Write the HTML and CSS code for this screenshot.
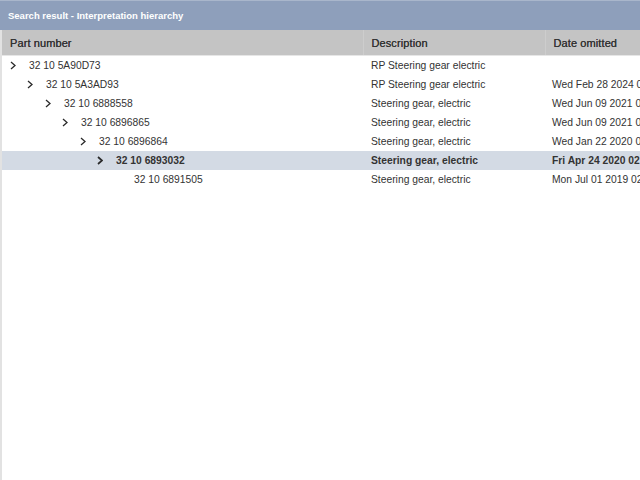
FILE: index.html
```html
<!DOCTYPE html>
<html>
<head>
<meta charset="utf-8">
<link rel="stylesheet" href="styles.css">
</head>
<body>
<div class="panel">
  <div class="titlebar">Search result - Interpretation hierarchy</div>
  <div class="content">
    <table class="grid">
      <colgroup>
        <col class="c-part">
        <col class="c-desc">
        <col class="c-date">
      </colgroup>
      <thead>
        <tr>
          <th class="h-part">Part number</th>
          <th>Description</th>
          <th>Date omitted</th>
        </tr>
      </thead>
      <tbody>
        <tr>
          <td><span class="node l0"><svg class="chev" viewBox="0 0 6 9"><polyline points="1,1 5,4.5 1,8"/></svg>32 10 5A90D73</span></td>
          <td>RP Steering gear electric</td>
          <td></td>
        </tr>
        <tr>
          <td><span class="node l1"><svg class="chev" viewBox="0 0 6 9"><polyline points="1,1 5,4.5 1,8"/></svg>32 10 5A3AD93</span></td>
          <td>RP Steering gear electric</td>
          <td>Wed Feb 28 2024 02:00:00</td>
        </tr>
        <tr>
          <td><span class="node l2"><svg class="chev" viewBox="0 0 6 9"><polyline points="1,1 5,4.5 1,8"/></svg>32 10 6888558</span></td>
          <td>Steering gear, electric</td>
          <td>Wed Jun 09 2021 02:00:00</td>
        </tr>
        <tr>
          <td><span class="node l3"><svg class="chev" viewBox="0 0 6 9"><polyline points="1,1 5,4.5 1,8"/></svg>32 10 6896865</span></td>
          <td>Steering gear, electric</td>
          <td>Wed Jun 09 2021 02:00:00</td>
        </tr>
        <tr>
          <td><span class="node l4"><svg class="chev" viewBox="0 0 6 9"><polyline points="1,1 5,4.5 1,8"/></svg>32 10 6896864</span></td>
          <td>Steering gear, electric</td>
          <td>Wed Jan 22 2020 01:00:00</td>
        </tr>
        <tr class="selected">
          <td><span class="node l5"><svg class="chev" viewBox="0 0 6 9"><polyline points="1,1 5,4.5 1,8"/></svg>32 10 6893032</span></td>
          <td>Steering gear, electric</td>
          <td>Fri Apr 24 2020 02:00:00</td>
        </tr>
        <tr>
          <td><span class="node l6"><svg class="chev hidden" viewBox="0 0 6 9"></svg>32 10 6891505</span></td>
          <td>Steering gear, electric</td>
          <td>Mon Jul 01 2019 02:00:00</td>
        </tr>
      </tbody>
    </table>
  </div>
</div>
</body>
</html>
```
FILE: styles.css
```css
html, body {
  margin: 0;
  padding: 0;
  height: 100%;
  background: #ffffff;
  font-family: "Liberation Sans", Arial, sans-serif;
  color: #333333;
  overflow: hidden;
}

.panel {
  display: flex;
  flex-direction: column;
  height: 480px;
  width: 640px;
}

.titlebar {
  height: 30px;
  line-height: 29px;
  background: #8e9fbb;
  border-top: 1px solid #a9b6cb;
  box-sizing: border-box;
  color: #ffffff;
  font-weight: bold;
  font-size: 9.5px;
  padding-left: 8px;
  flex: none;
}

.content {
  flex: 1;
  border-left: 2px solid #e2e2e2;
  overflow: hidden;
}

.grid {
  border-collapse: collapse;
  table-layout: fixed;
  width: 700px;
  font-size: 10.3px;
}

.c-part { width: 361px; }
.c-desc { width: 182px; }
.c-date { width: 157px; }

.grid thead th {
  background: #c4c4c4;
  height: 25px;
  padding: 1px 0 0 8px;
  text-align: left;
  font-weight: normal;
  font-size: 11px;
  color: #333333;
  border-left: 1px solid #cdcdcd;
  border-bottom: 1px solid #e6e6e6;
  box-sizing: border-box;
  white-space: nowrap;
  overflow: hidden;
  letter-spacing: 0.1px;
  text-shadow: 0 0 0.4px #333;
}

.grid thead th.h-part {
  border-left: none;
}

.grid tbody td {
  height: 19px;
  padding: 1px 0 0 7px;
  box-sizing: border-box;
  white-space: nowrap;
  overflow: hidden;
  vertical-align: middle;
}

.grid tbody td:first-child {
  padding-left: 6px;
}

.grid tbody td:nth-child(2) {
  padding-left: 8px;
}

.selected td {
  background: #d3dae4;
  font-weight: bold;
}

.node {
  display: inline-flex;
  align-items: center;
  height: 18px;
}

.chev {
  width: 6px;
  height: 9px;
  margin-right: 13px;
  flex: none;
}

.chev polyline {
  fill: none;
  stroke: #2a2a2a;
  stroke-width: 1.3;
}

.selected .chev polyline {
  stroke-width: 1.7;
}

.l0 { margin-left: 2px; }
.l1 { margin-left: 19px; }
.l2 { margin-left: 37px; }
.l3 { margin-left: 54px; }
.l4 { margin-left: 72px; }
.l5 { margin-left: 89px; }
.l6 { margin-left: 107px; }
```
